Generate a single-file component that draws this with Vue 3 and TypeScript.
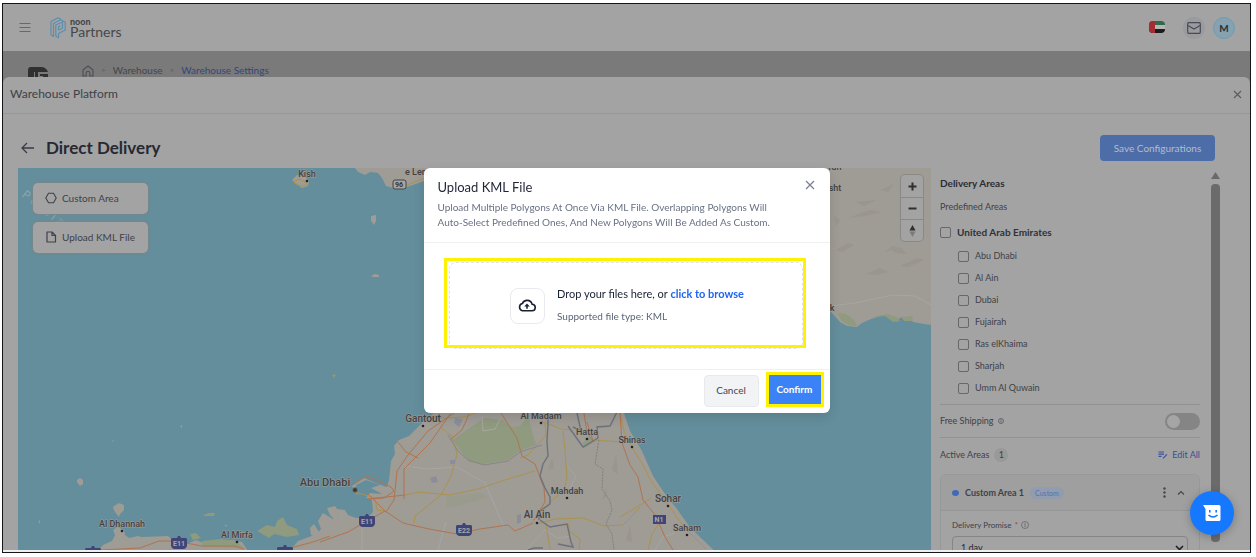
<script setup lang="ts">
import { ref } from 'vue'

interface Place {
  name: string
  x: number
  y: number
  size: number
  dotX?: number
  dotY?: number
}

interface Shield {
  code: string
  x: number
  y: number
}

const emirates = ref([
  { id: 'abu-dhabi', name: 'Abu Dhabi', checked: false },
  { id: 'al-ain', name: 'Al Ain', checked: false },
  { id: 'dubai', name: 'Dubai', checked: false },
  { id: 'fujairah', name: 'Fujairah', checked: false },
  { id: 'ras', name: 'Ras elKhaima', checked: false },
  { id: 'sharjah', name: 'Sharjah', checked: false },
  { id: 'umm', name: 'Umm Al Quwain', checked: false },
])
const country = ref(false)
const freeShipping = ref(false)
const promise = ref('1 day')

const places: Place[] = [
  { name: 'Kish', x: 307, y: 177, size: 9, dotX: 307, dotY: 181 },
  { name: 'e Ler', x: 415, y: 175, size: 9 },
  { name: 'sht', x: 835, y: 191, size: 9 },
  { name: 'ran', x: 835, y: 170, size: 9 },
  { name: 'k', x: 832, y: 311, size: 9 },
  { name: 'Gantout', x: 423, y: 422, size: 10, dotX: 423, dotY: 426 },
  { name: 'Al Madam', x: 541, y: 419, size: 9, dotX: 541, dotY: 423 },
  { name: 'Hatta', x: 587, y: 435, size: 9, dotX: 587, dotY: 439 },
  { name: 'Shinas', x: 632, y: 443, size: 9, dotX: 632, dotY: 447 },
  { name: 'Mahdah', x: 567, y: 494, size: 9, dotX: 567, dotY: 498 },
  { name: 'Abu Dhabi', x: 325, y: 486, size: 11 },
  { name: 'Al Ain', x: 537, y: 518, size: 10, dotX: 537, dotY: 523 },
  { name: 'Sohar', x: 668, y: 502, size: 10, dotX: 668, dotY: 506 },
  { name: 'Saham', x: 687, y: 531, size: 9, dotX: 687, dotY: 535 },
  { name: 'Al Dhannah', x: 122, y: 527, size: 9, dotX: 122, dotY: 531 },
  { name: 'Al Mirfa', x: 237, y: 538, size: 9, dotX: 237, dotY: 542 },
]

const shields: Shield[] = [
  { code: 'E11', x: 367, y: 521 },
  { code: 'E22', x: 464, y: 530 },
  { code: 'E11', x: 179, y: 543 },
  { code: '', x: 93, y: 553 },
  { code: '', x: 285, y: 552 },
]
</script>

<template>
  <div class="page">
    <div class="frame">
      <header class="topbar">
        <button class="icon-btn" aria-label="Menu">
          <svg width="12" height="12" viewBox="0 0 12 12"><path d="M0.5 1.5h11M0.5 5.5h11M0.5 9.5h11" stroke="#66686f" fill="none" /></svg>
        </button>
        <a class="brand" href="#">
          <svg width="16" height="22" viewBox="0 0 16 22" fill="none" stroke="#5b8fae" stroke-width="1.2" stroke-linejoin="round">
            <path d="M1 18V4.500L8 0.800l3 1.500M1 18l2.500 1.500V6.500L10.500 2.800l4.700 2.200v8L8.500 16.500v4.200L5.800 19V8L12.500 5v6.200L8.500 13V9.800l2-1" />
          </svg>
          <span class="brand-text"><b>noon</b><span>Partners</span></span>
        </a>
        <div class="top-actions">
          <svg class="flag" width="16" height="12" viewBox="0 0 16 12">
            <clipPath id="flagClip"><rect width="16" height="12" rx="4" /></clipPath>
            <g clip-path="url(#flagClip)">
              <rect width="16" height="4" fill="#2d6b4c" /><rect y="4" width="16" height="4" fill="#b5b5b5" />
              <rect y="8" width="16" height="4" fill="#1c1c1c" /><rect width="6" height="12" fill="#a52c30" />
            </g>
          </svg>
          <button class="round mail" aria-label="Messages">
            <svg width="14" height="12" viewBox="0 0 14 12" fill="none" stroke="#484b56" stroke-width="1.2"><rect x="0.700" y="0.700" width="12.600" height="10.600" rx="1" /><path d="M1 3.500l6 3.500 6-3.500" /></svg>
          </button>
          <button class="round avatar">M</button>
        </div>
      </header>

      <nav class="crumbs" aria-label="Breadcrumb">
        <svg class="store" width="20" height="12" viewBox="0 0 20 12"><path d="M0 12V4a3 3 0 0 1 3-3h10q5 0 7 5H10v6H7V6H6v6z" fill="#303030" /><path d="M12 8h8v4h-5v-2h-3z" fill="#303030" /></svg>
        <svg class="home" width="12" height="12" viewBox="0 0 12 12" fill="none" stroke="#4c4e54" stroke-width="1.1"><path d="M1 5l5-4 5 4v6H7.800V8a1.800 1.800 0 0 0-3.600 0v3H1z" /></svg>
        <span class="sep">&gt;</span>
        <a href="#">Warehouse</a>
        <span class="sep">&gt;</span>
        <a href="#" class="current">Warehouse Settings</a>
      </nav>

      <section class="drawer">
        <div class="drawer-head">
          <span>Warehouse Platform</span>
          <button class="icon-btn" aria-label="Close panel">
            <svg width="9" height="9" viewBox="0 0 9 9"><path d="M1 1l7 7M8 1L1 8" stroke="#5a5c64" stroke-width="1.200" /></svg>
          </button>
        </div>
        <div class="title-row">
          <button class="icon-btn" aria-label="Back">
            <svg width="13" height="12" viewBox="0 0 13 12" fill="none" stroke="#3a3d45" stroke-width="1.300"><path d="M13 6H1M6 1L1 6l5 5" /></svg>
          </button>
          <h1>Direct Delivery</h1>
          <button class="save">Save Configurations</button>
        </div>

        <div class="work">
          <div class="map">
            <svg class="map-art" viewBox="18 168 913 382" preserveAspectRatio="xMinYMin slice">
              <rect x="18" y="168" width="1400" height="800" fill="#648e9c" />
              <text class="gulf" transform="translate(21 196) rotate(38)">P e r s i a n   G u l f</text>
              <g fill="#9f9b95">
                <path d="M355 168l3 4 7 3 5-3 8 1 4 5 4 8 7 2 14-1 17-6 120-13z" />
                <path d="M800 168h131v157l-7-1-11-2-3-3-5 2-4-4-5 5-6-7-7 0-12 4-9 4-5 4-10-1-7-4-9-10-30-15z" />
                <path d="M98 551l5-6 9-4 3-6-2-5 4-3 7 3 1 5 4 3 9-2 4 1 26-1 8 8 11 0 9-4 10 4 12-3 14-1 10 2 6 9z" />
                <path d="M278 551l15-4 5-6 11-4 8-3 4-5-3-8 5-8 10 6 6-3-2-7 8 1 3 5 8 3 12-1 5-5-1-12-16-6-4-8 12-8 14 6 9 3 2-7 2-19 4-7-1-8 5-6 10-4 14-14 14-12h186l7 21 12 20 11 25 10 15 14 18 12 17 12 12 18 17z" />
                <path d="M292 180l5-5 8 1 4 5-1 5-6 2-6-4zM371 216l5-1v6l-2 4-3-4zM371 276l4-2 4 1v2l-6 0zM114 506l5-3 5 2v5l-4 4-1 3-4-5-2-4zM77 480l3-2 3 2v4l-3 2-3-4zM180 426l2-1v3zM112 440l2 1-1 1zM310 528l4-4 3 5 6 8-2 8-5-8-5-2zM327 508l8-2 5 7-4 8-6-6z" />
              </g>
              <g fill="#8f9a7f">
                <path d="M453 440l15-11 17-11 17 2 10 7 8-1 8-9 8 28-17 6-12 9-24 4-14-2zM583 443l5-6 8 4-12 7zM838 313l8 1 8 6 3 6-9-1-7-5zM870 318l17-4 10 3 3 4-7 1-8-6zM902 317l11-1-1 5-8 0z" />
                <path d="M190 534l6-1 5 5-8 2zM202 541l18-2 16 2 8 7-25-1-17 0zM203 515l6-2 6 0-1 3-9 0zM257 531l10-6 8 2 2-6 6-4 4 8 10 4 2 6-12 2-13-3-5 4zM332 374l4 1-2 3zM38 522l2-3v5zM224 525l4 0-2 2z" />
                <path d="M446 497l34-4 8 4-20 6-22 5z" opacity=".35" />
              </g>
              <path d="M356 485l10-5 14 5-9 3 11 6-12-1-5 6-9-6z" fill="#648e9c" />
              <g fill="none" stroke="#a8a6a3" stroke-width="1">
                <path d="M405 466l22 3 30-2 28 16 19 44M362 526v24M446 522l-8 28M528 548l17-18 12 8 15-2M482 416l1 15 12-2 5-10M831 306l24-3 38-8 22 1 16 9M655 550l8-13 12-4M567 466l9 10-7 14" />
              </g>
              <g fill="none" stroke="#aa934e" stroke-width="1">
                <path d="M440 427l12 9 5 18-6 22-10 19-26 21-1 7M405 495l14-3 31 3 28-6 30-10 27-8M545 423l1 12-18 20-8 3M541 421l20 8 10 1M563 431l2 19 2 28-3 12-23 20-8 12M537 524l18-5 28-1 21 8 19-1 10-10 7-8M546 524l4 26M568 523l2 9 10 7-1 11M422 415l22 3 20-1 12-4M620 413l4 18 10 20 8 12 8 16 18 26 16 22 22 22M355 492l20 6 2 12 8 1" />
                <path d="M595 440l26 2M620 517l22-13 9-6M660 522l-8 12-4 16" />
              </g>
              <g fill="none" stroke="#b0744f" stroke-width="1">
                <path d="M320 542l28-10 19-11 18-10 18 12 26 6 28 5 23-5 28-4 7 6 18-8M368 494l18 18 8-12 3-29 11-16 20-24 29-20M404 499l0-30 26-26 20-29M450 440l12-10 7-16M501 413l16 25 5 18 13 8 9 24 1 14-11 18M398 442l8 10 12 6M353 484l14-8 9 4 15 7 3 4-10 7-17 1 38-4M584 413l3 20 6 8-6-19M620 413l2 30 8 22 8 12 5 23 13 16 9 21 8 13M100 550l40-2 19-7h16l27 5h32l10 3M283 550l30-8 17-6" />
              </g>
              <path d="M294 182l5-3 7 3 1 3-6 1-5-2zM407 185l18-7" fill="none" stroke="#aa934e" />
              <g fill="none" stroke="#6e707c" stroke-width="1.400">
                <path d="M548 413v12l-1 16 1 15-5 8-3 12 5 12 5 9v7l-11 8v8M568 426l15 21 15-9-1-11 13-1 7-14M540 520l10 7 17-3 4 18 2 5-15-3M528 550l6-2h9M577 413l4 18-8-4" />
              </g>
              <path d="M448 435l10 16 10 9 16 5 24-4 12-9 22-7" fill="none" stroke="#868788" />
              <path d="M599 440l-4 24 8 5-1 20 8 12 2 9-6 14 6 10 2 16" fill="none" stroke="#828084" stroke-dasharray="2 1" />
              <g fill="#8e8982" opacity=".3">
                <path d="M884 253l8-7 10 2 4 6-9-1-6-3zM848 218l22-8 12 2-18 4zM856 202l20-2-12 6zM836 250l12-7 6 2-12 7zM866 274l14-6 8 4-12 3zM834 216l6 4-4 6zM900 266l18-8 6 2-16 7zM548 470l4-12 2 10zM612 470l4-16 2 20zM602 500l4-12 1 8zM626 540l4-14 2 16zM880 190l14-6-6 8z" />
              </g>
              <path d="M455 418l8 1-4 8-5-4zM430 478l6-2 2 6-6 1zM450 460h5v4h-5zM517 515l4-1v8l-4 2z" fill="#8c8d98" />
              <g v-for="(s, i) in shields" :key="i">
                <path :transform="`translate(${s.x} ${s.y})`" d="M-8-4l1-1h5l1-2h2l1 2h5l1 1v7q-1 3-3 3h-10q-2 0-3-3z" fill="#3f4677" />
                <text v-if="s.code" class="shield" :x="s.x" :y="s.y + 3">{{ s.code }}</text>
              </g>
              <rect x="653" y="515" width="13" height="9" fill="#3f4677" />
              <text class="shield" x="659" y="522">N1</text>
              <rect x="393" y="180" width="13" height="9" rx="2" fill="#a5a5a5" stroke="#444" />
              <text class="shield route" x="399" y="187">96</text>
              <circle cx="355" cy="490" r="2.500" fill="#3a3a3a" stroke="#777" />
              <g v-for="p in places" :key="p.name">
                <circle v-if="p.dotX" :cx="p.dotX" :cy="p.dotY" r="1.300" fill="#222" />
                <text class="place" :x="p.x" :y="p.y" :font-size="p.size">{{ p.name }}</text>
              </g>
            </svg>

            <div class="map-tools">
              <button>
                <svg width="12" height="12" viewBox="0 0 12 12" fill="none" stroke="#3f424a" stroke-width="1.100"><path d="M0.800 6L3.500 1.300h5L11.200 6 8.500 10.700h-5z" /></svg>
                <span>Custom Area</span>
              </button>
              <button>
                <svg width="12" height="12" viewBox="0 0 12 12" fill="none" stroke="#3f424a" stroke-width="1.200" stroke-linejoin="round"><path d="M2 1h5l3.500 3.500V11H2zM7 1v3.500h3.500" /></svg>
                <span>Upload KML File</span>
              </button>
            </div>
            <div class="zoomer">
              <button aria-label="Zoom in"><svg width="9" height="9" viewBox="0 0 9 9"><path d="M4.500 0.500v8M0.500 4.500h8" stroke="#2f2f2f" stroke-width="2" /></svg></button>
              <button aria-label="Zoom out"><svg width="9" height="9" viewBox="0 0 9 9"><path d="M0.500 4.500h8" stroke="#2f2f2f" stroke-width="2" /></svg></button>
              <button aria-label="Reset north"><svg width="7" height="12" viewBox="0 0 7 12"><path d="M3.500 0L6.500 5.500h-6z" fill="#2f2f2f" /><path d="M3.500 12L6.500 6.500h-6z" fill="#7b7b7b" /></svg></button>
            </div>
          </div>

          <aside class="side">
            <div class="side-body">
              <h2>Delivery Areas</h2>
              <p class="sub">Predefined Areas</p>
              <label class="check country"><input v-model="country" type="checkbox" />United Arab Emirates</label>
              <label v-for="e in emirates" :key="e.id" class="check child"><input v-model="e.checked" type="checkbox" />{{ e.name }}</label>
              <div class="ship">
                <label for="ship">Free Shipping</label>
                <svg width="6" height="6" viewBox="0 0 6 6" fill="none" stroke="#55575d" stroke-width=".8"><circle cx="3" cy="3" r="2.500" /><path d="M3 1.500v3" /></svg>
                <input id="ship" v-model="freeShipping" type="checkbox" class="switch" />
              </div>
              <div class="active">
                <span>Active Areas</span><span class="count">1</span>
                <a href="#">
                  <svg width="10" height="8" viewBox="0 0 10 8" fill="none" stroke="#3a53a0" stroke-width="1.200"><path d="M0.500 1h5.500M0.500 3.200h5.500M0.500 5.400h3M5 7.400l4-4" /></svg>
                  Edit All
                </a>
              </div>
              <div class="card">
                <div class="card-head">
                  <i class="dot"></i><b>Custom Area 1</b><span class="tag">Custom</span>
                  <button class="icon-btn more" aria-label="More options"><svg width="3" height="11" viewBox="0 0 3 11" fill="#45474d"><circle cx="1.500" cy="1.500" r="1.200" /><circle cx="1.500" cy="5.500" r="1.200" /><circle cx="1.500" cy="9.500" r="1.200" /></svg></button>
                  <button class="icon-btn" aria-label="Collapse"><svg width="8" height="5" viewBox="0 0 8 5"><path d="M1 4.500l3-3 3 3" fill="none" stroke="#45474d" stroke-width="1.200" /></svg></button>
                </div>
                <div class="card-body">
                  <label for="promise">Delivery Promise <em>*</em>
                    <svg width="8" height="8" viewBox="0 0 8 8" fill="none" stroke="#666870" stroke-width=".8"><circle cx="4" cy="4" r="3.500" /><path d="M4 2v4" /></svg>
                  </label>
                  <div class="select">
                    <select id="promise" v-model="promise"><option>1 day</option><option>2 days</option></select>
                    <svg width="9" height="6" viewBox="0 0 9 6"><path d="M1 1l3.500 3.500L8 1" fill="none" stroke="#1c1d20" stroke-width="1.600" /></svg>
                  </div>
                </div>
              </div>
            </div>
            <div class="scroll" aria-hidden="true">
              <svg width="9" height="7" viewBox="0 0 9 7"><path d="M4.500 0L9 7H0z" fill="#6a6a6a" /></svg>
              <i></i>
            </div>
          </aside>
        </div>
      </section>
    </div>

    <div class="overlay">
      <div class="modal" role="dialog" aria-labelledby="modal-title">
        <div class="modal-head">
          <div>
            <h3 id="modal-title">Upload KML File</h3>
            <p>Upload Multiple Polygons At Once Via KML File. Overlapping Polygons Will Auto-Select Predefined Ones, And New Polygons Will Be Added As Custom.</p>
          </div>
          <button class="icon-btn" aria-label="Close dialog">
            <svg width="10" height="10" viewBox="0 0 10 10"><path d="M1 1l8 8M9 1L1 9" stroke="#7a8096" stroke-width="1.300" /></svg>
          </button>
        </div>
        <div class="modal-body">
          <div class="drop">
            <span class="cloud">
              <svg width="18" height="13" viewBox="0 0 18 13" fill="none" stroke="#1a2133" stroke-width="1.600"><path d="M4.500 11.800h9.200a3.300 3.300 0 0 0 .4-6.600A5.200 5.200 0 0 0 4.300 4.600a3.700 3.700 0 0 0 .2 7.200z" stroke-linejoin="round" /><path d="M9 9.800V6" stroke-width="1.600" /><path d="M6.200 7.600L9 4.500l2.800 3.100z" fill="#1a2133" stroke="none" /></svg>
            </span>
            <div>
              <p class="drop-main">Drop your files here, or <a href="#">click to browse</a></p>
              <p class="drop-sub">Supported file type: KML</p>
            </div>
          </div>
        </div>
        <div class="modal-foot">
          <button class="cancel">Cancel</button>
          <button class="confirm">Confirm</button>
        </div>
      </div>
    </div>

    <button class="chat" aria-label="Open chat">
      <svg width="18" height="16" viewBox="0 0 18 16"><path d="M0 0h16a1.500 1.500 0 0 1 1.500 1.500v13A1.500 1.500 0 0 1 16 16H4a1.500 1.500 0 0 1-1.500-1.500V4z" fill="#fff" /><path d="M6.800 5v2.500M13.200 5v2.500M5.500 10q4.500 4 9 0" fill="none" stroke="#1677ff" stroke-width="1.600" /></svg>
    </button>
  </div>
</template>

<style>
html,
body {
  background: #fff;
}
</style>

<style scoped>
* {
  box-sizing: border-box;
}
.page {
  height: 100vh;
  padding: 3px 5px 4px 2px;
  display: flex;
  font-family: Lato, "Liberation Sans", sans-serif;
  font-size: 10px;
  line-height: 12px;
  color: #3e4148;
}
.frame {
  flex: 1;
  min-width: 0;
  border: 1px solid #16161a;
  padding-bottom: 2px;
  display: flex;
  flex-direction: column;
  overflow: hidden;
  background: #7a7a7a linear-gradient(#eee, #eee) bottom / 100% 2px no-repeat;
}
button {
  font: inherit;
  color: inherit;
  border: 0;
  padding: 0;
  background: none;
  cursor: pointer;
}
a {
  color: inherit;
  text-decoration: none;
}
h1, h2, h3, p {
  margin: 0;
}
svg {
  display: block;
}
.icon-btn {
  display: grid;
  place-items: center;
}
.topbar {
  flex: none;
  height: 47px;
  display: flex;
  align-items: center;
  padding: 0 15px 0 16px;
  background: #a3a3a3;
}
.brand {
  display: flex;
  align-items: center;
  gap: 4px;
  margin-left: 19px;
}
.brand-text {
  display: flex;
  flex-direction: column;
  font-size: 14px;
  line-height: 12px;
  color: #46484c;
}
.brand-text b {
  font-size: 9px;
  line-height: 8px;
  font-weight: 900;
}
.top-actions {
  margin-left: auto;
  display: flex;
  align-items: center;
}
.flag {
  margin: 0 18px 2px 0;
}
.round {
  width: 22px;
  height: 22px;
  border-radius: 50%;
  display: grid;
  place-items: center;
}
.mail {
  background: #9a9a9f;
  margin-right: 8px;
}
.avatar {
  background: #86a2b0;
  border: 1px solid #6f9cb5;
  font-weight: 700;
  color: #2c3036;
}
.crumbs {
  flex: none;
  height: 32px;
  margin-bottom: -6px;
  padding: 0 25px;
  display: flex;
  align-items: center;
  background: #7a7a7a;
  color: #45464a;
}
.store {
  align-self: flex-end;
  margin: 0 34px 5px 0;
}
.home {
  margin-top: 8px;
}
.crumbs a {
  margin-top: 6px;
}
.crumbs .sep {
  margin: 6px 7px 0;
  font-size: 8px;
  color: #5a5a5c;
}
.crumbs .current {
  color: #34467f;
}
.drawer {
  flex: 1;
  min-height: 0;
  display: flex;
  flex-direction: column;
  background: #a3a3a3;
  border-radius: 6px 6px 0 0;
}
.drawer-head {
  flex: none;
  height: 37px;
  padding: 0 8px 2px 7px;
  display: flex;
  align-items: center;
  justify-content: space-between;
  border-bottom: 1px solid #979797;
  font-size: 12px;
}
.title-row {
  flex: none;
  height: 54px;
  padding: 20px 35px 6px 18px;
  display: flex;
  align-items: center;
}
h1 {
  margin-left: 12px;
  font-size: 17px;
  line-height: 20px;
  font-weight: 700;
  color: #262932;
}
.save {
  margin-left: auto;
  width: 115px;
  height: 26px;
  border-radius: 4px;
  background: #4c6da8;
  color: #b4bccb;
}
.work {
  flex: 1;
  min-height: 0;
  display: flex;
  padding-left: 15px;
}
.map {
  flex: 1;
  min-width: 0;
  position: relative;
  overflow: hidden;
}
.map-art {
  width: 100%;
  height: 100%;
}
.place {
  font-family: Roboto, sans-serif;
  font-weight: 500;
  text-anchor: middle;
  fill: #414141;
  stroke: #a3a09b;
  stroke-width: 1px;
  paint-order: stroke;
}
.gulf {
  font-family: "Open Sans", sans-serif;
  font-size: 12px;
  fill: #8aa8b3;
  white-space: pre;
}
.shield {
  font: 700 7px Roboto, sans-serif;
  text-anchor: middle;
  fill: #a7a7ae;
}
.route {
  fill: #333;
}
.map-tools {
  position: absolute;
  left: 15px;
  top: 15px;
  display: grid;
  gap: 8px;
}
.map-tools button {
  width: 115px;
  height: 31px;
  padding: 0 0 1px 12px;
  display: flex;
  align-items: center;
  gap: 5px;
  border-radius: 5px;
  background: #a3a3a3;
  box-shadow: 0 0 2px 1px #7a8587;
}
.zoomer {
  position: absolute;
  right: 8px;
  top: 7px;
  width: 22px;
  border-radius: 4px;
  background: #a3a3a3;
  box-shadow: 0 0 0 1px #8a8885;
}
.zoomer button {
  width: 22px;
  height: 22px;
  display: grid;
  place-items: center;
}
.zoomer button + button {
  border-top: 1px solid #898989;
}
.side {
  flex: none;
  width: 319px;
  padding: 0 30px 0 9px;
  display: flex;
  justify-content: space-between;
}
.side-body {
  width: 260px;
  font-size: 9px;
  overflow: hidden;
}
h2 {
  margin-top: 8px;
  font-size: 10px;
  line-height: 14px;
  font-weight: 700;
  color: #2a2d35;
}
.sub {
  margin: 11px 0 8px;
}
.check {
  display: flex;
  align-items: center;
  gap: 6px;
  height: 22px;
}
.check input {
  appearance: none;
  width: 11px;
  height: 11px;
  margin: 0;
  border: 1px solid #66676b;
  border-radius: 2px;
}
.country {
  margin-bottom: 2px;
  font-size: 10px;
  font-weight: 700;
  color: #2f3239;
}
.child {
  padding-left: 18px;
}
.ship {
  height: 34px;
  margin-top: 5px;
  display: flex;
  align-items: center;
  gap: 4px;
  border: solid #929292;
  border-width: 1px 0;
}
.switch {
  appearance: none;
  margin: 0 0 0 auto;
  width: 35px;
  height: 17px;
  padding: 2px;
  border-radius: 9px;
  background: #858585;
}
.switch::before {
  content: "";
  display: block;
  width: 13px;
  height: 13px;
  border-radius: 50%;
  background: #a5a5a5;
}
.active {
  height: 33px;
  display: flex;
  align-items: center;
}
.count {
  width: 14px;
  height: 14px;
  margin-left: 5px;
  border-radius: 50%;
  text-align: center;
  line-height: 14px;
  background: #999;
}
.active a {
  margin-left: auto;
  display: flex;
  align-items: center;
  gap: 4px;
  color: #3a4f94;
}
.card {
  margin-top: 3px;
  border: 1px solid #989898;
  border-radius: 6px;
}
.card-head {
  height: 36px;
  padding: 0 14px 0 11px;
  display: flex;
  align-items: center;
  border-bottom: 1px solid #959595;
  background: #9f9f9f;
  border-radius: 6px 6px 0 0;
}
.dot {
  width: 7px;
  height: 6px;
  margin-right: 6px;
  border-radius: 50%;
  background: #4069b8;
}
.tag {
  margin-left: 6px;
  padding: 0 5px;
  border-radius: 6px;
  background: #929cb0;
  color: #5572ae;
  font-size: 7px;
}
.more {
  margin: 0 11px 0 auto;
}
.card-body {
  padding: 8px 11px;
}
.card-body label {
  display: flex;
  align-items: center;
  gap: 3px;
  font-size: 8px;
}
.card-body em {
  color: #a04040;
}
.select {
  position: relative;
  margin-top: 5px;
}
.select select {
  appearance: none;
  width: 100%;
  height: 22px;
  padding: 0 8px;
  border: 1px solid #858585;
  border-radius: 4px;
  background: transparent;
  color: #25272c;
  font: 9px Lato, sans-serif;
}
.select svg {
  position: absolute;
  right: 4px;
  top: 9px;
}
.scroll {
  width: 9px;
  padding: 4px 0 8px;
  display: flex;
  flex-direction: column;
  gap: 5px;
}
.scroll i {
  flex: 1;
  border-radius: 4px;
  background: #6b6b6b;
}
.overlay {
  position: fixed;
  inset: 0;
  padding: 168px 3px 0 0;
  display: flex;
  justify-content: center;
  align-items: flex-start;
}
.modal {
  width: 406px;
  border-radius: 6px;
  background: #fff;
  box-shadow: 0 4px 12px rgba(0, 0, 0, 0.12);
}
.modal-head {
  display: flex;
  align-items: flex-start;
  justify-content: space-between;
  padding: 11px 15px 12px 14px;
  border-bottom: 1px solid #eff0f2;
}
.modal-head .icon-btn {
  margin-top: 1px;
}
.modal-head p {
  max-width: 348px;
  margin-top: 5px;
  line-height: 15px;
  font-size: 10px;
  color: #697184;
}
h3 {
  font-size: 13px;
  line-height: 16px;
  font-weight: 400;
  color: #1f2536;
}
.modal-body {
  padding: 19px 27px 20px 25px;
}
.drop {
  position: relative;
  height: 87px;
  padding-left: 3px;
  display: flex;
  align-items: center;
  justify-content: center;
  gap: 12px;
  border: 1px dashed #e0e1e6;
  border-radius: 7px;
}
.drop::after {
  content: "";
  position: absolute;
  inset: -5px -4px 0 -6px;
  border: 3px solid #fff200;
  pointer-events: none;
}
.cloud {
  width: 35px;
  height: 36px;
  display: grid;
  place-items: center;
  border: 1px solid #e9eaee;
  border-radius: 8px;
}
.drop-main {
  font-size: 11px;
  line-height: 14px;
  color: #1a2133;
}
.drop-main a {
  color: #2264f0;
  font-weight: 700;
}
.drop-sub {
  margin: 8px 0 2px;
  font-size: 10px;
  line-height: 14px;
  color: #5b6475;
}
.modal-foot {
  display: flex;
  justify-content: flex-end;
  align-items: flex-end;
  gap: 7px;
  padding: 2px 6px 6px;
  border-top: 1px solid #eff0f2;
}
.cancel {
  width: 55px;
  height: 32px;
  padding-bottom: 2px;
  border: 1px solid #e8e9ec;
  border-radius: 4px;
  background: #f2f3f5;
  color: #3d4557;
}
.confirm {
  width: 58px;
  height: 35px;
  padding-bottom: 2px;
  border: 3px solid #fff200;
  background: #3b82f6;
  color: #fff;
  font-weight: 700;
}
.chat {
  position: fixed;
  right: 22px;
  bottom: 22px;
  width: 44px;
  height: 44px;
  border-radius: 50%;
  display: grid;
  place-items: center;
  background: #1677ff;
  box-shadow: 0 2px 8px rgba(0, 0, 0, 0.25);
}
</style>
